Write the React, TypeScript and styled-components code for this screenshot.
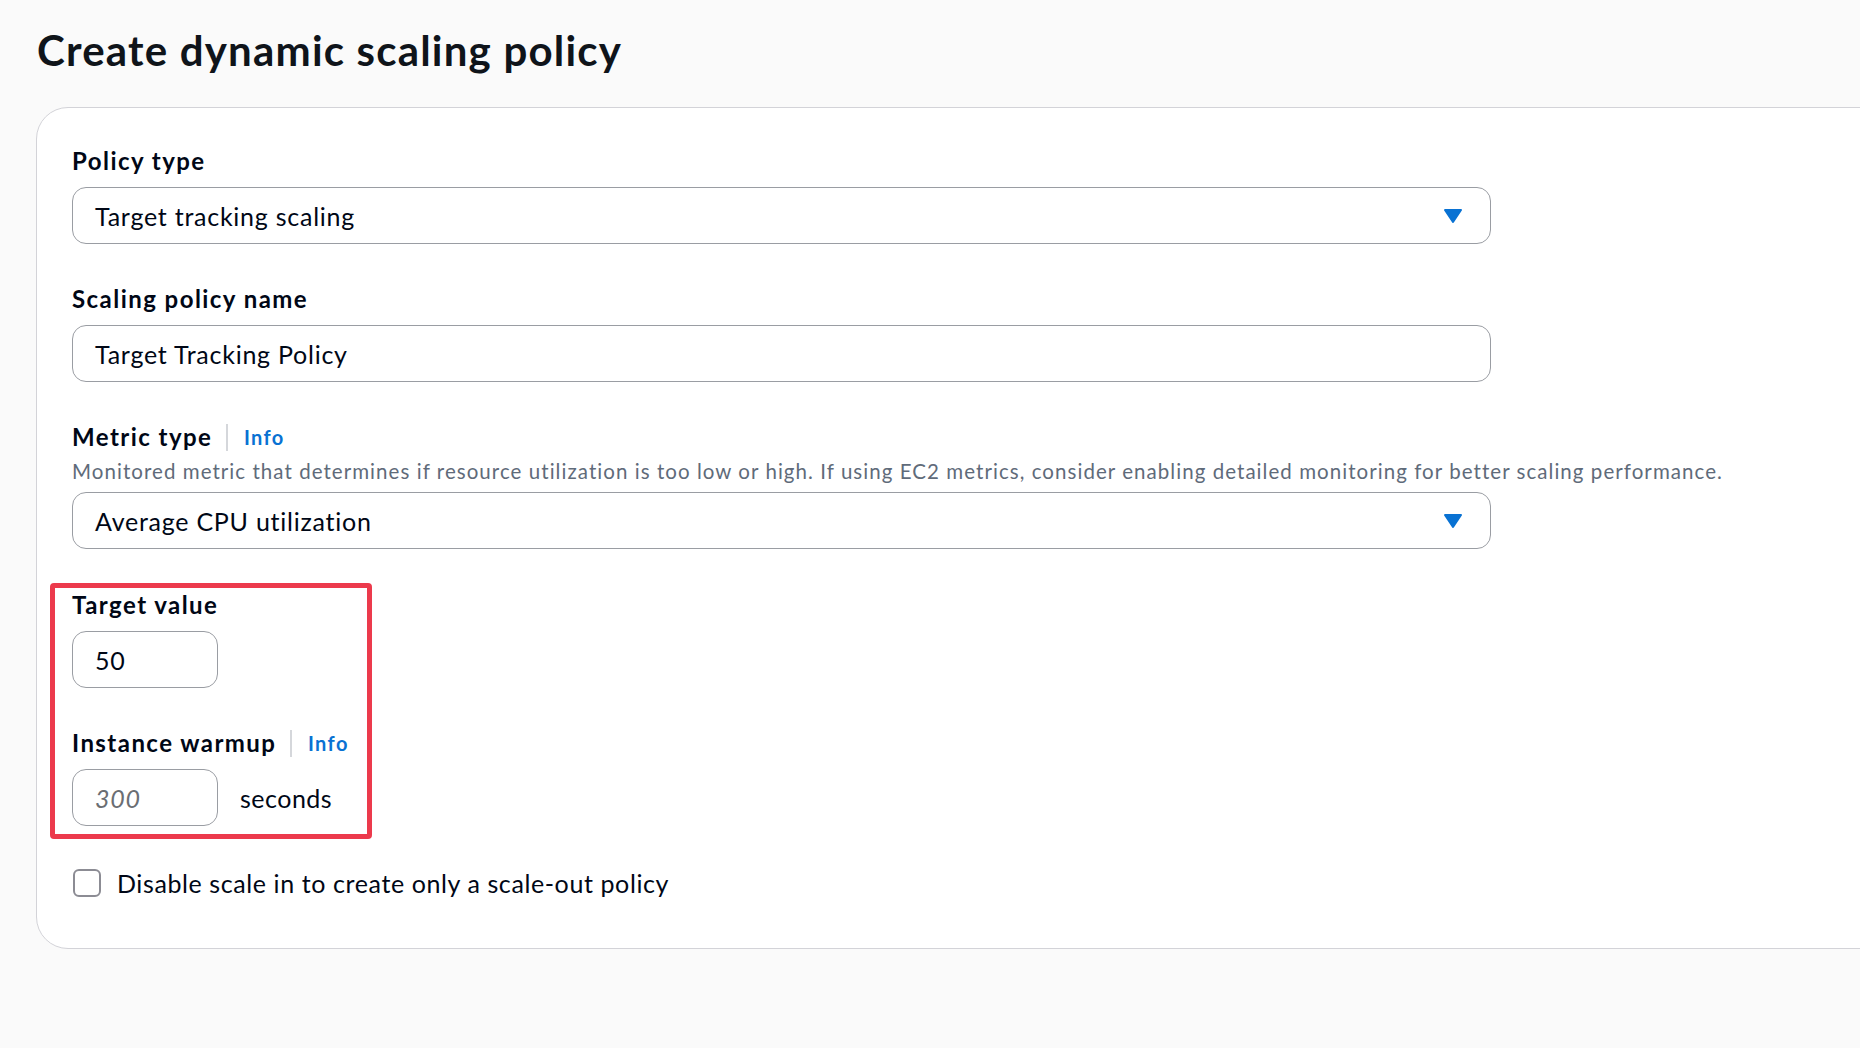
import React from 'react';
import styled, { createGlobalStyle } from 'styled-components';

const GlobalStyle = createGlobalStyle`
  html, body {
    margin: 0;
    padding: 0;
    background: #fafafa;
  }
  body {
    font-family: Lato, "Open Sans", "Noto Sans", sans-serif;
    color: #000716;
    overflow: hidden;
  }
`;

const Page = styled.div`
  box-sizing: border-box;
  width: 100%;
  height: 1048px;
  padding: 25px 0 0 36px;
  overflow: hidden;
`;

const Title = styled.h1`
  margin: 0 0 32px 1px;
  font-size: 42px;
  line-height: 50px;
  font-weight: 700;
  letter-spacing: 1.2px;
  color: #0f141a;
`;

const Panel = styled.section`
  box-sizing: border-box;
  width: calc(100% + 80px);
  height: 842px;
  padding: 37px 0 0 35px;
  background: #ffffff;
  border: 1.5px solid #d3d3d8;
  border-radius: 32px;
  display: flex;
  flex-direction: column;
`;

const Field = styled.div<{ $gap?: number }>`
  display: flex;
  flex-direction: column;
  margin-bottom: ${(p) => p.$gap ?? 39}px;
`;

const LabelRow = styled.div<{ $tight?: boolean }>`
  display: flex;
  align-items: center;
  height: 32px;
  margin-bottom: ${(p) => (p.$tight ? 4 : 10)}px;
`;

const Label = styled.span`
  font-size: 24px;
  line-height: 32px;
  font-weight: 700;
  letter-spacing: 1.45px;
  color: #000716;
`;

const Divider = styled.span`
  width: 1.5px;
  height: 27px;
  margin: 0 16px 0 14px;
  background: #d5d7db;
`;

const InfoLink = styled.a`
  font-size: 20px;
  line-height: 32px;
  font-weight: 700;
  letter-spacing: 1.4px;
  color: #0972d3;
  text-decoration: none;
  cursor: pointer;
`;

const Description = styled.div`
  font-size: 20.5px;
  line-height: 28px;
  letter-spacing: 1.05px;
  color: #5f6b7a;
  margin-bottom: 7px;
  white-space: nowrap;
`;

const Box = styled.div<{ $width?: number }>`
  box-sizing: border-box;
  display: flex;
  align-items: center;
  width: ${(p) => (p.$width ? `${p.$width}px` : '1419px')};
  height: 57px;
  padding: 0 27px 0 22px;
  border: 1.5px solid #9a9da3;
  border-radius: 14px;
  background: #ffffff;
  font-size: 25px;
  line-height: 30px;
  letter-spacing: 0.75px;
  color: #000716;
`;

const BoxText = styled.span<{ $placeholder?: boolean }>`
  flex: 1;
  font-style: ${(p) => (p.$placeholder ? 'italic' : 'normal')};
  color: ${(p) => (p.$placeholder ? '#6b6e73' : '#000716')};
`;

const InlineRow = styled.div`
  display: flex;
  align-items: center;
  gap: 22px;
`;

const Unit = styled.span`
  font-size: 25px;
  line-height: 30px;
  letter-spacing: 0.5px;
  color: #000716;
`;

const Highlight = styled.div`
  box-sizing: border-box;
  width: 322px;
  margin: 34px 0 28px -22px;
  padding: 1px 0 8px 17px;
  border: 5px solid #ec3a4c;
  border-radius: 4px;
`;

const CheckRow = styled.label`
  display: flex;
  align-items: center;
  gap: 16px;
  margin-left: 1px;
  font-size: 25px;
  line-height: 32px;
  letter-spacing: 0.6px;
  color: #000716;
`;

const CheckBox = styled.span`
  box-sizing: border-box;
  width: 28px;
  height: 28px;
  border: 2px solid #8c8c94;
  border-radius: 6px;
  background: #ffffff;
`;

const Caret = () => (
  <svg width="20" height="16" viewBox="0 0 20 16">
    <path d="M2 2 H18 L10 14 Z" fill="#0972d3" stroke="#0972d3" strokeWidth="2" strokeLinejoin="round" />
  </svg>
);

const App: React.FC = () => {
  return (
    <Page>
      <GlobalStyle />
      <Title>Create dynamic scaling policy</Title>
      <Panel>
        <Field>
          <LabelRow>
            <Label>Policy type</Label>
          </LabelRow>
          <Box>
            <BoxText>Target tracking scaling</BoxText>
            <Caret />
          </Box>
        </Field>

        <Field>
          <LabelRow>
            <Label>Scaling policy name</Label>
          </LabelRow>
          <Box>
            <BoxText>Target Tracking Policy</BoxText>
          </Box>
        </Field>

        <Field $gap={0}>
          <LabelRow $tight>
            <Label>Metric type</Label>
            <Divider />
            <InfoLink>Info</InfoLink>
          </LabelRow>
          <Description>
            Monitored metric that determines if resource utilization is too low or high. If using EC2 metrics,
            consider enabling detailed monitoring for better scaling performance.
          </Description>
          <Box>
            <BoxText>Average CPU utilization</BoxText>
            <Caret />
          </Box>
        </Field>

        <Highlight>
          <Field>
            <LabelRow>
              <Label>Target value</Label>
            </LabelRow>
            <Box $width={146}>
              <BoxText>50</BoxText>
            </Box>
          </Field>
          <Field $gap={0}>
            <LabelRow>
              <Label>Instance warmup</Label>
              <Divider />
              <InfoLink>Info</InfoLink>
            </LabelRow>
            <InlineRow>
              <Box $width={146}>
                <BoxText $placeholder>300</BoxText>
              </Box>
              <Unit>seconds</Unit>
            </InlineRow>
          </Field>
        </Highlight>

        <CheckRow>
          <CheckBox />
          Disable scale in to create only a scale-out policy
        </CheckRow>
      </Panel>
    </Page>
  );
};

export default App;
